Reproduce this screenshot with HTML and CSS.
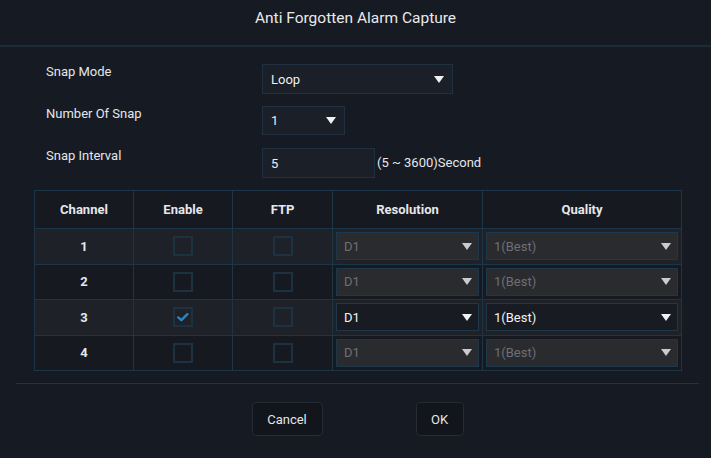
FILE: index.html
```html
<!DOCTYPE html>
<html>
<head>
<meta charset="utf-8">
<link rel="stylesheet" href="styles.css">
</head>
<body>
<div class="dialog">
  <div class="header">Anti Forgotten Alarm Capture</div>
  <div class="divider"></div>
  <div class="form">
    <div class="row">
      <div class="label">Snap Mode</div>
      <div class="select wide"><span>Loop</span><i class="arrow"></i></div>
    </div>
    <div class="row">
      <div class="label">Number Of Snap</div>
      <div class="select narrow"><span>1</span><i class="arrow"></i></div>
    </div>
    <div class="row">
      <div class="label">Snap Interval</div>
      <div class="input">5</div>
      <div class="hint">(5 ~ 3600)Second</div>
    </div>
  </div>
  <table class="grid">
    <colgroup>
      <col class="c1"><col class="c2"><col class="c3"><col class="c4"><col class="c5">
    </colgroup>
    <thead>
      <tr><th>Channel</th><th>Enable</th><th>FTP</th><th>Resolution</th><th>Quality</th></tr>
    </thead>
    <tbody>
      <tr class="odd">
        <td class="num">1</td>
        <td><span class="cb"></span></td>
        <td><span class="cb"></span></td>
        <td class="sel"><div class="tsel dis"><span>D1</span><i class="arrow"></i></div></td>
        <td class="sel"><div class="tsel dis"><span>1(Best)</span><i class="arrow"></i></div></td>
      </tr>
      <tr>
        <td class="num">2</td>
        <td><span class="cb"></span></td>
        <td><span class="cb"></span></td>
        <td class="sel"><div class="tsel dis"><span>D1</span><i class="arrow"></i></div></td>
        <td class="sel"><div class="tsel dis"><span>1(Best)</span><i class="arrow"></i></div></td>
      </tr>
      <tr class="odd">
        <td class="num">3</td>
        <td><span class="cb checked"><svg viewBox="0 0 20 20" width="18" height="18"><path d="M4 10.5 L8 14 L15.5 6.5" fill="none" stroke="#2b86c0" stroke-width="3" stroke-linecap="round" stroke-linejoin="round"/></svg></span></td>
        <td><span class="cb"></span></td>
        <td class="sel"><div class="tsel"><span>D1</span><i class="arrow"></i></div></td>
        <td class="sel"><div class="tsel"><span>1(Best)</span><i class="arrow"></i></div></td>
      </tr>
      <tr>
        <td class="num">4</td>
        <td><span class="cb"></span></td>
        <td><span class="cb"></span></td>
        <td class="sel"><div class="tsel dis"><span>D1</span><i class="arrow"></i></div></td>
        <td class="sel"><div class="tsel dis"><span>1(Best)</span><i class="arrow"></i></div></td>
      </tr>
    </tbody>
  </table>
  <div class="footline"></div>
  <div class="buttons">
    <div class="btn cancel">Cancel</div>
    <div class="btn ok">OK</div>
  </div>
</div>
</body>
</html>
```

FILE: styles.css
```css
html, body {
  margin: 0;
  padding: 0;
  background: #161a22;
}
body {
  font-family: Roboto, "Liberation Sans", Arial, sans-serif;
  color: #e4e6ea;
  width: 711px;
  height: 458px;
  overflow: hidden;
}
.dialog {
  display: flex;
  flex-direction: column;
}
.header {
  height: 45px;
  box-sizing: border-box;
  padding-top: 8px;
  text-align: center;
  font-size: 15.5px;
  line-height: 20px;
  color: #e8e9ec;
}
.divider {
  height: 2px;
  background: #1a2c35;
}
.form {
  display: flex;
  flex-direction: column;
  gap: 12px;
  padding: 17px 0 0 46px;
}
.row {
  display: flex;
  align-items: flex-start;
  height: 30px;
}
.label {
  width: 216px;
  font-size: 13px;
  line-height: 16px;
  color: #e4e6ea;
}
.select, .input {
  box-sizing: border-box;
  height: 30px;
  border: 1px solid #1f3140;
  background: #1b1f27;
  display: flex;
  align-items: center;
  padding: 0 8px 0 8px;
  font-size: 13px;
  color: #eceef1;
}
.select span { flex: 1; }
.wide { width: 191px; }
.narrow { width: 83px; height: 29px; }
.input { width: 113px; }
.hint {
  font-size: 13px;
  line-height: 30px;
  padding-left: 2px;
  color: #e4e6ea;
}
.arrow {
  display: block;
  width: 0;
  height: 0;
  border-left: 5px solid transparent;
  border-right: 5px solid transparent;
  border-top: 7px solid #f0f1f3;
}
.grid {
  margin: 12px 0 0 34px;
  width: 647px;
  border-collapse: collapse;
  table-layout: fixed;
  font-size: 13px;
}
.c1 { width: 99px; }
.c2 { width: 99px; }
.c3 { width: 100px; }
.c4 { width: 150px; }
.c5 { width: 199px; }
.grid th, .grid td {
  border: 1px solid #1c3548;
  text-align: center;
  padding: 0;
}
.grid th {
  height: 37px;
  font-weight: 700;
  color: #e6e7ea;
  background: #161920;
}
.grid td { height: 34.5px; background: #161920; }
.grid tr.odd td { background: #1e2128; }
.num { font-weight: 700; color: #e6e7ea; }
.cb {
  display: inline-flex;
  align-items: center;
  justify-content: center;
  width: 20px;
  height: 20px;
  box-sizing: border-box;
  border: 2px solid #1c3142;
  vertical-align: middle;
}
.grid td.sel { padding: 0 3px; }
.tsel {
  box-sizing: border-box;
  height: 28px;
  display: flex;
  align-items: center;
  padding: 0 6px 0 7px;
  border: 1px solid #213646;
  background: #181b22;
  color: #f0f1f3;
  text-align: left;
}
.tsel span { flex: 1; }
.tsel.dis {
  background: #2a2b2f;
  color: #6d6f73;
}
.tsel.dis .arrow { border-top-color: #c9cbce; }
.footline {
  margin: 12px 12px 0 16px;
  height: 1px;
  background: #1e3343;
}
.buttons {
  display: flex;
  justify-content: center;
  gap: 93px;
  padding: 18px 0 0 4px;
}
.btn {
  box-sizing: border-box;
  height: 34px;
  border: 1px solid #252a33;
  border-radius: 4px;
  background: #12151b;
  display: flex;
  align-items: center;
  justify-content: center;
  font-size: 13px;
  color: #e4e6ea;
}
.cancel { width: 71px; }
.ok { width: 48px; }
```
